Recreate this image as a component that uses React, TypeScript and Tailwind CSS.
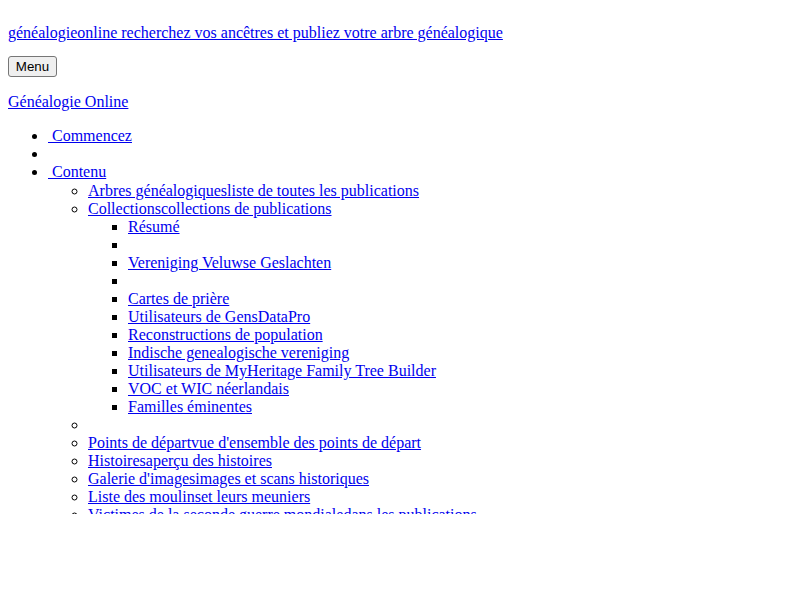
const link = 'text-[#0000ee] underline'

const collections = [
  'Résumé',
  '',
  'Vereniging Veluwse Geslachten',
  '',
  'Cartes de prière',
  'Utilisateurs de GensDataPro',
  'Reconstructions de population',
  'Indische genealogische vereniging',
  'Utilisateurs de MyHeritage Family Tree Builder',
  'VOC et WIC néerlandais',
  'Familles éminentes',
]

const sections = [
  'Points de départvue d\'ensemble des points de départ',
  'Histoiresaperçu des histoires',
  'Galerie d\'imagesimages et scans historiques',
  'Liste des moulinset leurs meuniers',
  'Victimes de la seconde guerre mondialedans les publications',
]

function Item({ text }: { text: string }) {
  if (!text) return <li className="h-[18px]"></li>
  return (
    <li>
      <a href="#" className={link}>{text}</a>
    </li>
  )
}

export default function App() {
  return (
    <div className="bg-white w-[800px] h-[600px]">
      <div
        className="h-[514px] overflow-hidden px-2 pt-6 text-[16px] leading-[18px] text-black"
        style={{ fontFamily: '"Liberation Serif", "Times New Roman", serif' }}
      >
        <p>
          <a href="#" className={link}>généalogieonline recherchez vos ancêtres et publiez votre arbre généalogique</a>
        </p>

        <div className="mt-[14px] h-[21px]">
          <button
            className="h-[21px] w-[49px] rounded-[3px] border border-[#767676] bg-[#efefef] text-[13.33px] leading-[15px] text-black"
            style={{ fontFamily: '"Liberation Sans", Arial, sans-serif' }}
          >
            Menu
          </button>
        </div>

        <p className="mt-4">
          <a href="#" className={link}>Généalogie Online</a>
        </p>

        <ul className="mt-4 pl-10 list-disc">
          <li>
            <a href="#" className={link}>{'\u00a0'}Commencez</a>
          </li>
          <li className="h-[18px]"></li>
          <li>
            <a href="#" className={link}>{'\u00a0'}Contenu</a>
            <ul className="mt-px pl-10 list-[circle]">
              <li>
                <a href="#" className={link}>Arbres généalogiquesliste de toutes les publications</a>
              </li>
              <li>
                <a href="#" className={link}>Collectionscollections de publications</a>
                <ul className="pl-10 list-[square]">
                  {collections.map((c, i) => (
                    <Item key={i} text={c} />
                  ))}
                </ul>
              </li>
              <li className="h-[18px]"></li>
              {sections.map((s, i) => (
                <Item key={i} text={s} />
              ))}
            </ul>
          </li>
        </ul>
      </div>
    </div>
  )
}
